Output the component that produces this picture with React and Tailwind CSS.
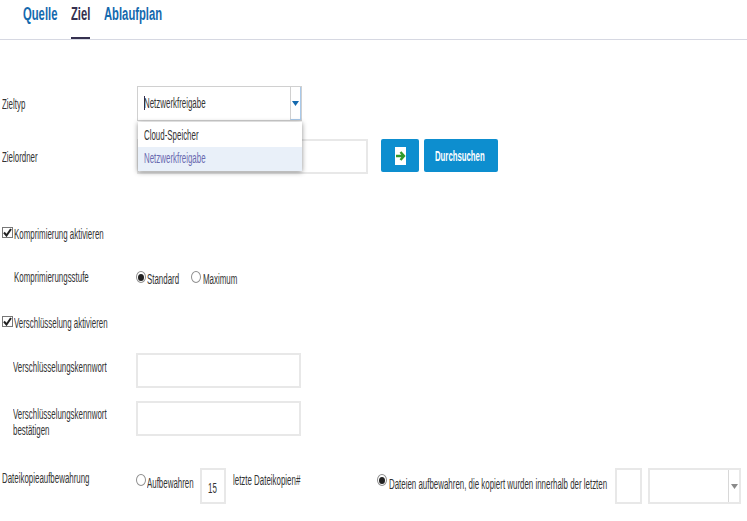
import React from 'react'

// The reference is squeezed horizontally, so text keeps its height and is narrowed to a set width
const Txt = ({ w, children, className = '' }) => (
  <span className={`inline-block shrink-0 h-[16px] leading-[16px] whitespace-nowrap ${w} ${className}`}>
    <span className="inline-block origin-left scale-x-[var(--sx)]">{children}</span>
  </span>
)

const Radio = ({ checked }) => (
  <span className="flex items-center justify-center w-[10px] h-[12px] shrink-0 rounded-[50%] border border-[#8f8f8f] bg-white">
    {checked && <span className="w-[6px] h-[7px] rounded-[50%] bg-[#222]" />}
  </span>
)

const Check = () => (
  <span className="flex items-center justify-center w-[11px] h-[11px] shrink-0 border border-[#777] bg-white">
    <svg width="9" height="9" viewBox="0 0 9 9">
      <path d="M1 4.5 L3.5 7.5 L8 1" fill="none" stroke="#222" strokeWidth="2" />
    </svg>
  </span>
)

const Field = ({ className = '', children }) => (
  <div className={`shrink-0 border-2 border-[#e8e8e8] bg-white ${className}`}>{children}</div>
)

const Tab = ({ w, active, children }) => (
  <div className={`flex flex-col items-start h-[39px] pt-[4px] ${w}`}>
    <span className={`h-[20px] leading-[20px] text-[18px] font-bold whitespace-nowrap origin-left scale-x-[.625] ${active ? 'text-[#35304f]' : 'text-[#1469ae]'}`}>
      {children}
    </span>
    {active && <span className="mt-auto w-[19px] h-[2px] bg-[#35304f]" />}
  </div>
)

export default function App() {
  return (
    <div className="relative w-[747px] h-[521px] overflow-hidden bg-white text-[14px] text-[#333] font-['Liberation_Sans',Arial,sans-serif] [--sx:.565]">
      {/* tabs */}
      <div className="flex gap-[14px] h-[40px] pl-[23px] border-b border-[#d6d8e2]">
        <Tab w="w-[34px]">Quelle</Tab>
        <Tab w="w-[19px]" active>Ziel</Tab>
        <Tab w="w-[58px]">Ablaufplan</Tab>
      </div>

      <div className="pl-[2px]">
        {/* Zieltyp */}
        <div className="flex items-center h-[35px] mt-[46px]">
          <Txt w="w-[135px]">Zieltyp</Txt>
          <div className="relative flex w-[165px] h-[35px] border border-[#d0d0d0] bg-white">
            <span className="flex-1 flex items-center pl-[6px] pb-[1px]">
              {/* text cursor */}
              <span className="w-px h-[14px] -mr-px bg-[#35304f]" />
              <Txt w="w-[62px]">Netzwerkfreigabe</Txt>
            </span>
            <span className="flex items-center justify-center w-[11px] border-l border-[#d0d0d0] border-r border-b border-r-[#a9c9ea] border-b-[#a9c9ea]">
              <svg width="7" height="5" viewBox="0 0 7 5"><path d="M0 0H7L3.5 5Z" fill="#1469ae" /></svg>
            </span>
            {/* open list */}
            <div className="absolute z-10 left-0 top-[35px] w-[164px] bg-white shadow-[0_1px_5px_rgba(0,0,0,.45)]">
              <div className="flex items-center h-[25px] pl-[6px]"><Txt w="w-[54px]">Cloud-Speicher</Txt></div>
              <div className="flex items-center h-[24px] pl-[6px] pb-[2px] bg-[#e9f0f9] text-[#6a6ab0]"><Txt w="w-[62px]">Netzwerkfreigabe</Txt></div>
            </div>
          </div>
        </div>

        {/* Zielordner */}
        <div className="flex items-start mt-[18px]">
          <Txt w="w-[135px] mt-[10px]">Zielordner</Txt>
          <Field className="w-[231px] h-[35px]" />
          <button className="flex items-center justify-center w-[38px] h-[33px] ml-[13px] rounded-[2px] bg-[#0d8ecf]">
            <span className="flex items-center justify-center w-[11px] h-[18px] bg-white">
              <svg width="11" height="12" viewBox="0 0 11 12">
                <path d="M1 6H8M5.5 2L9 6L5.5 10" fill="none" stroke="#2f9a2a" strokeWidth="2.4" />
              </svg>
            </span>
          </button>
          <button className="flex items-center justify-center w-[74px] h-[33px] ml-[5px] rounded-[2px] bg-[#0d8ecf] text-white font-bold">
            <Txt w="w-[53px]" className="[--sx:.555]">Durchsuchen</Txt>
          </button>
        </div>

        {/* Komprimierung */}
        <div className="flex items-center mt-[50px] h-[16px]">
          <Check />
          <Txt w="w-[90px] ml-[1px] mt-[3px]">Komprimierung aktivieren</Txt>
        </div>
        <div className="flex items-center mt-[29px] pl-[12px] h-[16px]">
          <Txt w="w-[122px]">Komprimierungsstufe</Txt>
          <Radio checked />
          <Txt w="w-[32px] ml-[1px] mt-[3px]">Standard</Txt>
          <span className="w-[12px]" />
          <Radio />
          <Txt w="w-[34px] ml-[2px] mt-[3px]">Maximum</Txt>
        </div>

        {/* Verschluesselung */}
        <div className="flex items-center mt-[28px] h-[16px]">
          <Check />
          <Txt w="w-[90px] ml-[1px] mt-[3px]">Verschlüsselung aktivieren</Txt>
        </div>
        <div className="flex items-start mt-[24px] pl-[11px]">
          <Txt w="w-[123px] mt-[6px]">Verschlüsselungskennwort</Txt>
          <Field className="w-[165px] h-[35px]" />
        </div>
        <div className="flex items-start mt-[13px] pl-[11px]">
          <div className="flex flex-col w-[123px] mt-[5px] leading-[16px]">
            <Txt w="w-[95px]">Verschlüsselungskennwort</Txt>
            <Txt w="w-[36px]">bestätigen</Txt>
          </div>
          <Field className="w-[165px] h-[35px]" />
        </div>

        {/* Dateikopieaufbewahrung */}
        <div className="flex items-start mt-[30px]">
          <Txt w="w-[134px] mt-[2px]">Dateikopieaufbewahrung</Txt>
          <span className="mt-[6px]"><Radio /></span>
          <Txt w="w-[46px] ml-[1px] mt-[7px]">Aufbewahren</Txt>
          <Field className="flex items-center justify-center w-[26px] h-[36px] ml-[7px]">
            <Txt w="w-[11px] mt-[3px]">15</Txt>
          </Field>
          <Txt w="w-[69px] ml-[7px] mt-[4px]">letzte Dateikopien#</Txt>
          <span className="w-[75px]" />
          <span className="mt-[6px]"><Radio checked /></span>
          <Txt w="w-[220px] ml-[2px] mt-[8px]">Dateien aufbewahren, die kopiert wurden innerhalb der letzten</Txt>
          <Field className="w-[27px] h-[36px] ml-[6px]" />
          <Field className="flex justify-end w-[93px] h-[36px] ml-[6px]">
            <span className="flex items-center justify-center w-[11px] border-l border-[#d8d8d8]">
              <svg width="7" height="5" viewBox="0 0 7 5"><path d="M0 0H7L3.5 5Z" fill="#8a8a8a" /></svg>
            </span>
          </Field>
        </div>
      </div>
    </div>
  )
}
